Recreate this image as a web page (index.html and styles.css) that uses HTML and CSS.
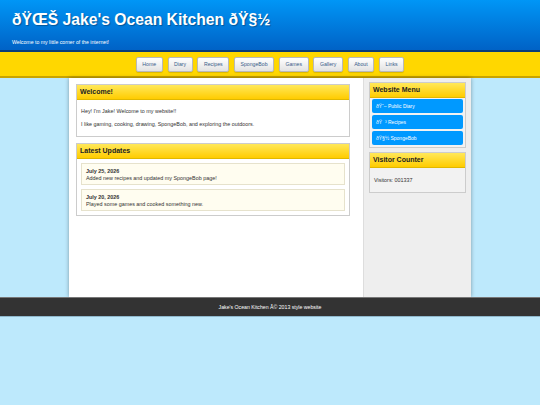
FILE: index.html
```html
<!DOCTYPE html>
<html>
<head>
    <title>Jake's Ocean Kitchen</title>
    <meta charset="utf-8">
    <link rel="stylesheet" href="styles.css">
</head>
<body>
    <div class="header">
        <h1>ðŸŒŠ Jake's Ocean Kitchen ðŸ§½</h1>
        <p>Welcome to my little corner of the internet!</p>
    </div>
    <div class="nav">
        <a href="#">Home</a>
        <a href="#">Diary</a>
        <a href="#">Recipes</a>
        <a href="#">SpongeBob</a>
        <a href="#">Games</a>
        <a href="#">Gallery</a>
        <a href="#">About</a>
        <a href="#">Links</a>
    </div>
    <div class="container">
        <div class="main-content">
            <div class="box">
                <div class="box-title">Welcome!</div>
                <div class="box-body">
                    <p>Hey! I'm Jake! Welcome to my website!!</p>
                    <p>I like gaming, cooking, drawing, SpongeBob, and exploring the outdoors.</p>
                </div>
            </div>
            <div class="box">
                <div class="box-title">Latest Updates</div>
                <div class="box-body updates">
                    <div class="update">
                        <b>July 25, 2026</b>
                        Added new recipes and updated my SpongeBob page!
                    </div>
                    <div class="update">
                        <b>July 20, 2026</b>
                        Played some games and cooked something new.
                    </div>
                </div>
            </div>
        </div>
        <div class="sidebar">
            <div class="box">
                <div class="box-title">Website Menu</div>
                <div class="menu">
                    <a href="#">ðŸ“– Public Diary</a>
                    <a href="#">ðŸ&nbsp;&nbsp;³ Recipes</a>
                    <a href="#">ðŸ§½ SpongeBob</a>
                </div>
            </div>
            <div class="box">
                <div class="box-title">Visitor Counter</div>
                <div class="box-body counter">Visitors: 001337</div>
            </div>
        </div>
    </div>
    <div class="footer">Jake's Ocean Kitchen Â© 2013 style website</div>
</body>
</html>
```

FILE: styles.css
```css
body {
    font-family: "Liberation Sans", Arial, sans-serif;
    background-color: #bde9fc;
    color: #333;
    margin: 0;
    padding: 0;
}
.header {
    height: 52px;
    background: linear-gradient(#0096f6, #0062c6);
    border-bottom: 2px solid #0a3d7a;
    color: white;
    padding: 0 12px;
    box-sizing: border-box;
    display: flex;
    flex-direction: column;
}
.header h1 {
    margin: 10px 0 0;
    font-size: 15.7px;
    line-height: 19px;
    text-shadow: 1px 1px 1px rgba(0, 0, 0, 0.3);
}
.header p {
    margin: 10px 0 0;
    font-size: 5.2px;
}
.nav {
    height: 24px;
    background-color: #ffd700;
    border-bottom: 2px solid #c9a400;
    display: flex;
    justify-content: center;
    align-items: center;
    gap: 4.8px;
}
.nav a {
    font-size: 5.2px;
    color: #3a5c8a;
    text-decoration: none;
    background: linear-gradient(#ffffff, #e2e2e2);
    border: 1px solid #b9b9b9;
    border-radius: 2px;
    height: 13px;
    line-height: 13px;
    padding: 0 5.5px;
    box-shadow: 0 1px 1px rgba(0, 0, 0, 0.15);
}
.container {
    width: 402px;
    height: 219px;
    margin: 0 auto;
    display: flex;
    background: white;
    box-shadow: 0 0 4px rgba(0, 0, 0, 0.35);
}
.main-content {
    flex: 1;
    padding: 6px 13px 0 7px;
    display: flex;
    flex-direction: column;
    gap: 6px;
}
.sidebar {
    width: 108px;
    box-sizing: border-box;
    background-color: #eeeeee;
    border-left: 1px solid #dddddd;
    padding: 4px 5px 0 5px;
    display: flex;
    flex-direction: column;
    gap: 4px;
}
.box {
    background: white;
    border: 1px solid #cccccc;
}
.sidebar .box {
    background: #f2f2f2;
}
.box-title {
    height: 14px;
    line-height: 14px;
    padding: 0 3px;
    font-size: 7px;
    font-weight: bold;
    color: #222;
    background: linear-gradient(#ffe85a, #ffcc00);
    border-bottom: 1px solid #e0b800;
}
.box-body {
    padding: 5px 4px 2px;
    font-size: 5.4px;
}
.box-body p {
    margin: 3px 0 7px;
}
.updates {
    display: flex;
    flex-direction: column;
    gap: 4px;
    padding: 4px 4px 4px;
}
.update {
    background: #fffdf0;
    border: 1px solid #e6e2cc;
    padding: 4px 4px 3px;
    line-height: 6.5px;
}
.update b {
    display: block;
}
.menu {
    display: flex;
    flex-direction: column;
    gap: 2px;
    padding: 1px 2px 2px;
}
.menu a {
    background: #0099ff;
    color: white;
    text-decoration: none;
    font-size: 5px;
    height: 14px;
    line-height: 14px;
    padding: 0 4px;
    border-radius: 2px;
}
.counter {
    padding: 9px 4px 9px;
}
.footer {
    height: 18px;
    line-height: 18px;
    background: #333333;
    border-top: 1px solid #777777;
    border-bottom: 1px solid #8fb8cc;
    color: white;
    text-align: center;
    font-size: 5.2px;
}
```
